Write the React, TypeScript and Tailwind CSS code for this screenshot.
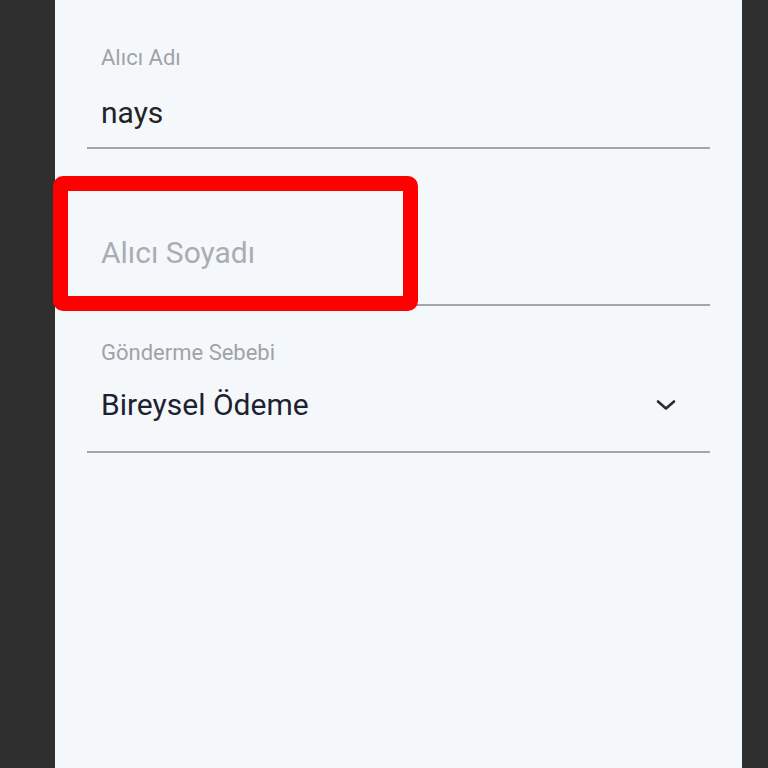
export default function App() {
  return (
    <div className="flex h-[768px] w-[768px] overflow-hidden bg-[#2f2f2f] font-['Roboto',sans-serif]">
      <div className="relative ml-[55px] h-full w-[687px] bg-[#f5f8fb]">
        <div className="pl-[32px] pr-[32px]">
          {/* Alıcı Adı */}
          <div className="border-b-2 border-[#a2a6aa] pt-[44px] pb-[16px]">
            <div className="pl-[14px] text-[22px] leading-[28px] text-[#a0a3a6]">Alıcı Adı</div>
            <div className="mt-[23px] pl-[14px] text-[30px] leading-[36px] text-[#222326]">nays</div>
          </div>

          {/* Alıcı Soyadı */}
          <div className="border-b-2 border-[#a2a6aa] pt-[86px] pb-[33px]">
            <div className="pl-[14px] text-[30px] leading-[36px] text-[#a9adb2]">Alıcı Soyadı</div>
          </div>

          {/* Gönderme Sebebi */}
          <div className="border-b-2 border-[#a2a6aa] pt-[33px] pb-[28px]">
            <div className="pl-[14px] text-[22px] leading-[28px] text-[#a0a3a6]">Gönderme Sebebi</div>
            <div className="mt-[20px] flex items-center justify-between pl-[14px] pr-[33px]">
              <span className="text-[30px] leading-[36px] text-[#1e2230]">Bireysel Ödeme</span>
              <svg width="22" height="12" viewBox="0 0 22 12" fill="none">
                <path d="M3 2.5 L11 9.5 L19 2.5" stroke="#2a2c30" strokeWidth="2.6" strokeLinecap="round" strokeLinejoin="round" />
              </svg>
            </div>
          </div>
        </div>

        {/* annotation box */}
        <div className="absolute left-[-2px] top-[176px] h-[135px] w-[365px] rounded-[10px] border-[15px] border-[#ff0000]" />
      </div>
    </div>
  )
}
